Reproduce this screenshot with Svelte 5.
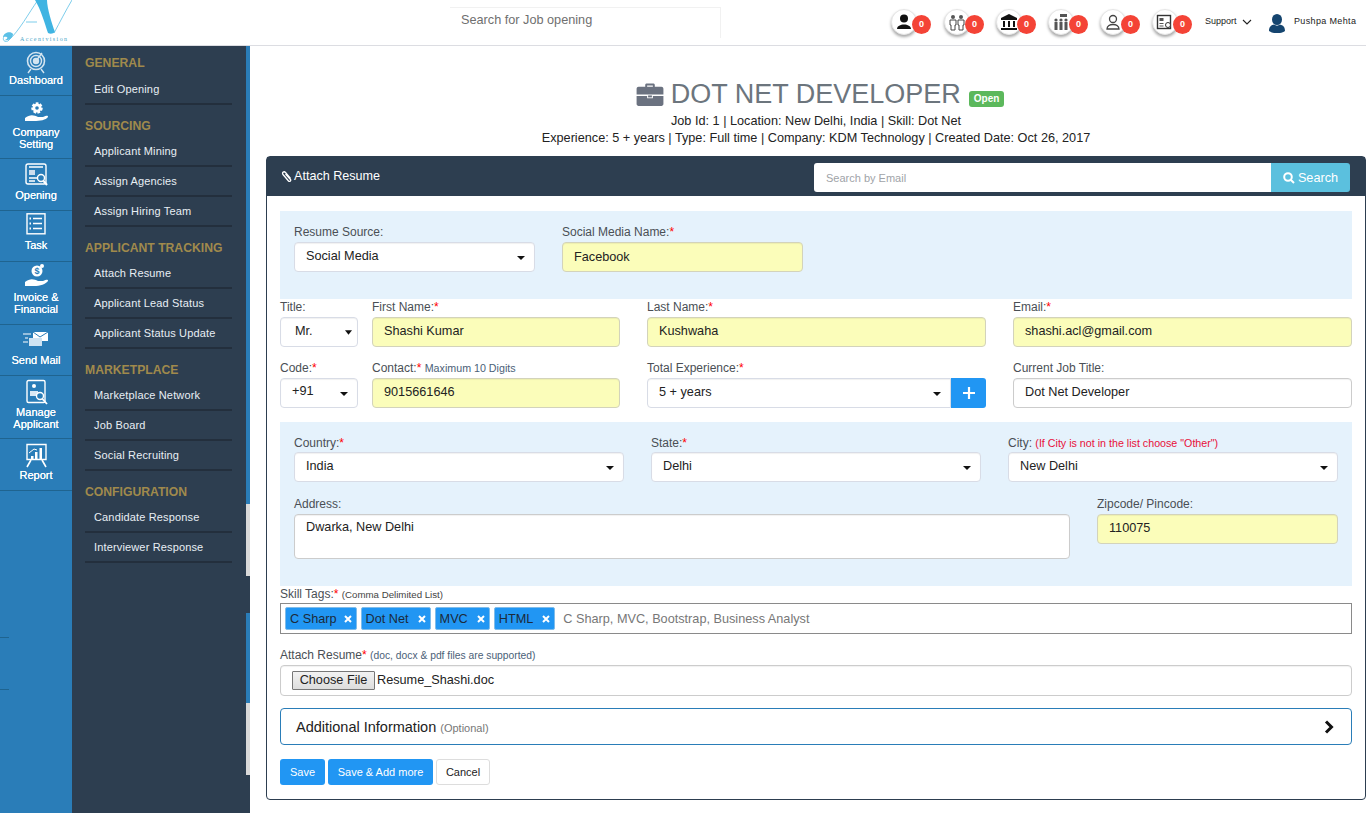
<script>
  const rail = [
    { id: 'target', label: ['Dashboard'], h: 50, pt: 5 },
    { id: 'gear', label: ['Company', 'Setting'], h: 63, pt: 3 },
    { id: 'opening', label: ['Opening'], h: 52, pt: 3 },
    { id: 'task', label: ['Task'], h: 51, pt: 3 },
    { id: 'money', label: ['Invoice &', 'Financial'], h: 63, pt: 2 },
    { id: 'mail', label: ['Send Mail'], h: 51, pt: 2 },
    { id: 'manage', label: ['Manage', 'Applicant'], h: 63, pt: 3 },
    { id: 'report', label: ['Report'], h: 52, pt: 3 }
  ];
  const menu = [
    { t: 'GENERAL', items: ['Edit Opening'] },
    { t: 'SOURCING', items: ['Applicant Mining', 'Assign Agencies', 'Assign Hiring Team'] },
    { t: 'APPLICANT TRACKING', items: ['Attach Resume', 'Applicant Lead Status', 'Applicant Status Update'] },
    { t: 'MARKETPLACE', items: ['Marketplace Network', 'Job Board', 'Social Recruiting'] },
    { t: 'CONFIGURATION', items: ['Candidate Response', 'Interviewer Response'] }
  ];
  const notes = ['user', 'team', 'bank', 'group', 'agent', 'news'];
  const tags = ['C Sharp', 'Dot Net', 'MVC', 'HTML'];
</script>

<div class="page">
  <header class="top">
    <div class="logo">
      <svg width="72" height="45" viewBox="0 0 72 45">
        <path d="M38 0 C28 14 20 30 8 41 C3 43 2 38 5 35" fill="none" stroke="#5cc0e6" stroke-width="0.8"/>
        <path d="M3 37 C4 32 11 31 13 34 C13 38 8 41 5 40 C8 39 9 36 3 37 Z" fill="#5cc0e6"/>
        <path d="M26 22 H37" stroke="#5cc0e6" stroke-width="0.8"/>
        <path d="M35 0 H47 C47 8 52 24 55 32 C53 34 50 34 48 33 C45 24 41 10 35 0 Z" fill="#3fb4e2"/>
        <path d="M72 0 C66 10 60 22 54 33" fill="none" stroke="#5cc0e6" stroke-width="0.8"/>
        <text x="20" y="41" class="logotext">Accentvision</text>
      </svg>
    </div>
    <div class="search-wrap"><div class="top-search">Search for Job opening</div></div>
    <div class="top-right">
      {#each notes as n}
        <div class="note">
          <span class="circle">
            <svg width="18" height="18" viewBox="0 0 18 18" fill={n === 'user' || n === 'bank' ? '#111' : '#555'}>
              {#if n === 'user'}
                <circle cx="9" cy="5.500" r="4"/><path d="M2 16 C2 10 16 10 16 16 Z"/>
              {:else if n === 'team'}
                <circle cx="5" cy="4" r="2"/><circle cx="13" cy="4" r="2"/><path d="M2 7h6v5H7v5H3v-5H2z" fill="none" stroke="#444"/><path d="M10 7h6v5h-1v5h-4v-5h-1z" fill="none" stroke="#444"/>
              {:else if n === 'bank'}
                <path d="M9 1 L17 5 V7 H1 V5 Z M3 8h2v6H3z M8 8h2v6H8z M13 8h2v6h-2z M1 15h16v2H1z"/>
              {:else if n === 'group'}
                <circle cx="4" cy="7" r="1.600"/><circle cx="9" cy="7" r="1.600"/><circle cx="14" cy="7" r="1.600"/><path d="M2.500 9h3v8h-3zM7.500 9h3v8h-3zM12.500 9h3v8h-3z"/><rect x="8" y="1" width="7" height="3"/>
              {:else if n === 'agent'}
                <circle cx="9" cy="6" r="3.500" fill="none" stroke="#444" stroke-width="1.300"/><path d="M3 16 C3 10 15 10 15 16 Z" fill="none" stroke="#444" stroke-width="1.300"/>
              {:else}
                <rect x="1.500" y="2.500" width="13" height="13" fill="none" stroke="#333" stroke-width="1.400"/><rect x="3.500" y="5" width="4" height="3"/><path d="M3.500 10h4v1h-4zM3.500 12.500h4v1h-4z"/><circle cx="12" cy="12" r="2.500" fill="#fff" stroke="#333"/>
              {/if}
            </svg>
          </span>
          <span class="badge">0</span>
        </div>
      {/each}
      <div class="support">Support
        <svg width="10" height="6" viewBox="0 0 10 6"><path d="M1 1 L5 5 L9 1" fill="none" stroke="#222" stroke-width="1.100"/></svg>
      </div>
      <svg class="me" width="18" height="20" viewBox="0 0 18 20" fill="#15456f"><ellipse cx="9" cy="6.500" rx="5" ry="5.500"/><path d="M1 18 C1 12 5 12 6 11.500 C8 13 10 13 12 11.500 C13 12 17 12 17 18 C13 21 5 21 1 18 Z"/></svg>
      <div class="name">Pushpa Mehta</div>
    </div>
  </header>

  <div class="body">
    <nav class="rail">
      {#each rail as r}
        <a class="rail-item" style="height:{r.h}px;padding-top:{r.pt}px">
          <svg width="28" height="26" viewBox="0 0 28 26" fill="none" stroke="#fff" stroke-width="1.400">
            {#if r.id === 'target'}
              <g opacity=".8"><circle cx="14" cy="10" r="8.500" stroke-width="1.600"/><circle cx="14" cy="10" r="5.500"/><circle cx="14" cy="10" r="2.500" fill="#fff"/><path d="M14 10 L20 2 M9 18 L6 22 M19 18 L22 22"/></g>
            {:else if r.id === 'gear'}
              <g transform="translate(0,2)"><circle cx="15" cy="7" r="4.500" fill="#fff" stroke-width="2.500" stroke-dasharray="2.500 1.400"/><circle cx="15" cy="7" r="1.800" fill="#2a7db8" stroke="none"/><path d="M3 17 C8 13 12 14 16 16 H21 C24 15 26 14 26 16 C24 19 18 20 12 20 H3 Z" fill="#fff" stroke="none"/></g>
            {:else if r.id === 'opening'}
              <rect x="4" y="2" width="20" height="20" rx="2"/><rect x="7" y="8" width="6" height="5" fill="#cde" stroke="none"/><path d="M7 5h14M7 16h8M7 19h6" /><circle cx="19" cy="16" r="3.500" fill="#2a7db8"/><path d="M21.500 19 L25 23" stroke-width="2"/>
            {:else if r.id === 'task'}
              <rect x="5" y="0.800" width="18" height="20"/><path d="M11 5.500h9M11 10.500h9M11 15.500h9" stroke-width="1.600"/><path d="M7.500 5.500h1.500M7.500 10.500h1.500M7.500 15.500h1.500" stroke-width="2"/>
            {:else if r.id === 'money'}
              <circle cx="15" cy="7" r="5.500" fill="#fff" stroke="none"/><text x="12.500" y="10" class="dollar">$</text><circle cx="20" cy="2" r="2" fill="#fff" stroke="none"/><path d="M3 18 C8 14 12 15 16 17 H21 C24 16 26 15 26 17 C24 20 18 22 12 22 H3 Z" fill="#fff" stroke="none"/>
            {:else if r.id === 'mail'}
              <g transform="translate(0,3)"><rect x="11" y="2" width="15" height="9" fill="#fff" stroke="none"/><rect x="7" y="8" width="13" height="8" fill="#cfe3f2" stroke="none"/><path d="M11 2 L18 7 L26 2" stroke="#2a7db8" stroke-width="1"/><path d="M1 4h8M3 8h3M1 12h5" stroke-width="1.200"/></g>
            {:else if r.id === 'manage'}
              <rect x="5" y="1.500" width="18" height="22" rx="1.500"/><circle cx="12" cy="7" r="2" fill="#fff" stroke="none"/><path d="M8 12h8v5H8z" fill="#dbe9f4" stroke="none"/><circle cx="18" cy="17" r="3.500" fill="#2a7db8"/><path d="M20.500 20 L25 25" stroke-width="1.800"/>
            {:else}
              <path d="M5 2.500h19v15H5z"/><path d="M9 14h2.500v3H9zM13 10h2.500v7H13zM17.500 6h2.500v11h-2.500z" fill="#fff" stroke="none"/><path d="M7 11 L12 7 L15 8" stroke-width="1"/><path d="M9 18 L5 25 M20 18 L24 25" stroke-width="1.600"/>
            {/if}
          </svg>
          {#each r.label as l}<span class="rail-text">{l}</span>{/each}
        </a>
      {/each}
      <i class="tick t1"></i><i class="tick t2"></i>
    </nav>

    <aside class="menu">
      {#each menu as m, i}
        <section class="group" class:first={i === 0}>
          <h4>{m.t}</h4>
          {#each m.items as it}<a class="mi">{it}</a>{/each}
        </section>
      {/each}
      <div class="sb">
        <i class="b" style="height:458px"></i><i class="g" style="height:72px"></i><i class="d" style="height:37px"></i><i class="b" style="height:90px"></i><i class="g" style="height:72px"></i>
      </div>
    </aside>

    <main class="main">
      <div class="title">
        <h1>
          <svg width="28" height="23" viewBox="0 0 28 24" fill="#6b7280"><path d="M9 4 V2 C9 1 10 .5 11 .5 H17 C18 .5 19 1 19 2 V4 H26 C27 4 28 5 28 6 V12 H0 V6 C0 5 1 4 2 4 Z M11 2.500 V4 H17 V2.500 Z"/><path d="M0 13.500 H11 V16 H17 V13.500 H28 V22 C28 23 27 24 26 24 H2 C1 24 0 23 0 22 Z"/><rect x="12" y="13" width="4" height="2"/></svg>
          <span>DOT NET DEVELOPER</span><em>Open</em>
        </h1>
        <p>Job Id: 1 | Location: New Delhi, India | Skill: Dot Net</p>
        <p>Experience: 5 + years | Type: Full time | Company: KDM Technology | Created Date: Oct 26, 2017</p>
      </div>

      <div class="card">
        <div class="card-head">
          <div class="ch-title">
            <svg width="13" height="14" viewBox="0 0 13 14" fill="none" stroke="#fff" stroke-width="1.300"><path d="M10.500 8.500 L5.500 2.500 C4 .8 1.500 2.500 3 4.500 L8.500 11 C9.500 12 11.500 10.800 10.500 9.500 L5.500 4"/></svg>
            Attach Resume
          </div>
          <div class="ch-search"><div class="ch-input">Search by Email</div><div class="ch-btn">
            <svg width="12" height="12" viewBox="0 0 12 12" fill="none" stroke="#fff" stroke-width="2"><circle cx="5" cy="5" r="3.800"/><path d="M8 8 L11 11"/></svg>
            Search</div></div>
        </div>
        <div class="card-body">
          <div class="band b1">
            <div class="f"><label>Resume Source:</label><div class="ctl sel">Social Media<i class="caret"></i></div></div>
            <div class="f"><label>Social Media Name:<b>*</b></label><div class="ctl yel fb">Facebook</div></div>
          </div>

          <div class="row r1">
            <div class="sub">
              <div class="f"><label>Title:</label><div class="ctl sel t">Mr.<svg class="native" width="7" height="5" viewBox="0 0 8 5"><path d="M0 0 L8 0 L4 5 Z" fill="#111"/></svg></div></div>
              <div class="f"><label>First Name:<b>*</b></label><div class="ctl yel">Shashi Kumar</div></div>
            </div>
            <div class="f"><label>Last Name:<b>*</b></label><div class="ctl yel">Kushwaha</div></div>
            <div class="f"><label>Email:<b>*</b></label><div class="ctl yel">shashi.acl@gmail.com</div></div>
          </div>

          <div class="row r2">
            <div class="sub">
              <div class="f"><label>Code:<b>*</b></label><div class="ctl sel c">+91<i class="caret"></i></div></div>
              <div class="f"><label>Contact:<b>*</b> <small>Maximum 10 Digits</small></label><div class="ctl yel">9015661646</div></div>
            </div>
            <div class="f"><label>Total Experience:<b>*</b></label>
              <div class="grp"><div class="ctl sel g1">5 + years<i class="caret"></i></div><div class="plus"><svg width="12" height="12" viewBox="0 0 12 12"><path d="M6 0 V12 M0 6 H12" stroke="#fff" stroke-width="2.200"/></svg></div></div>
            </div>
            <div class="f"><label>Current Job Title:</label><div class="ctl">Dot Net Developer</div></div>
          </div>

          <div class="band b2">
            <div class="three">
              <div class="f"><label>Country:<b>*</b></label><div class="ctl sel">India<i class="caret"></i></div></div>
              <div class="f"><label>State:<b>*</b></label><div class="ctl sel">Delhi<i class="caret"></i></div></div>
              <div class="f"><label>City: <small class="red">(If City is not in the list choose "Other")</small></label><div class="ctl sel">New Delhi<i class="caret"></i></div></div>
            </div>
            <div class="addr">
              <div class="f"><label>Address:</label><div class="ctl ta">Dwarka, New Delhi</div></div>
              <div class="f"><label>Zipcode/ Pincode:</label><div class="ctl yel">110075</div></div>
            </div>
          </div>

          <div class="f sk"><label>Skill Tags:<b>*</b> <small class="xs">(Comma Delimited List)</small></label>
            <div class="tags">
              {#each tags as t}<span class="tag">{t}<svg width="8" height="8" viewBox="0 0 8 8"><path d="M1 1 L7 7 M7 1 L1 7" stroke="#fff" stroke-width="2"/></svg></span>{/each}
              <span class="ph">C Sharp, MVC, Bootstrap, Business Analyst</span>
            </div>
          </div>

          <div class="f at"><label>Attach Resume<b>*</b> <small class="xs2">(doc, docx &amp; pdf files are supported)</small></label>
            <div class="ctl file"><span class="choose">Choose File</span><span>Resume_Shashi.doc</span></div>
          </div>

          <div class="acc"><span>Additional Information <small>(Optional)</small></span>
            <svg width="10" height="14" viewBox="0 0 10 14"><path d="M2 1.500 L7.500 7 L2 12.500" fill="none" stroke="#111" stroke-width="3"/></svg>
          </div>

          <div class="btns"><span class="btn p">Save</span><span class="btn p">Save &amp; Add more</span><span class="btn w">Cancel</span></div>
        </div>
      </div>
    </main>
  </div>
</div>

<style>
  :global(body) { margin: 0; background: #fff; font-family: "Liberation Sans", Arial, sans-serif; color: #333; overflow: hidden; }
  .page { width: 1366px; height: 813px; overflow: hidden; }
  .top { height: 45px; border-bottom: 1px solid #dcdde2; display: flex; align-items: flex-start; background: #fff; position: relative; }
  .logo { width: 72px; height: 45px; }
  .logotext { font-size: 6px; fill: #4aa6c8; letter-spacing: 1.400px; font-family: "Liberation Serif", serif; }
  .search-wrap { margin-left: 378px; width: 270px; height: 30px; margin-top: 7px; border-top: 1px solid #f1f1f1; border-right: 1px solid #f1f1f1; }
  .top-search { padding: 5px 0 0 11px; font-size: 12.700px; line-height: 15px; color: #6f6f6f; }
  .top-right { position: absolute; left: 891px; top: 0; right: 0; height: 45px; }
  .note { position: absolute; top: 9px; width: 42px; height: 26px; }
  .note:nth-child(1) { left: 0; } .note:nth-child(2) { left: 53px; } .note:nth-child(3) { left: 105px; }
  .note:nth-child(4) { left: 157px; } .note:nth-child(5) { left: 209px; } .note:nth-child(6) { left: 261px; }
  .circle { position: absolute; left: 0; top: 0; width: 26px; height: 26px; border-radius: 50%; background: #fff; border: 1px solid #e6e6e6; box-shadow: 0 2px 3px rgba(0,0,0,.35); display: flex; align-items: center; justify-content: center; box-sizing: border-box; }
  .badge { position: absolute; left: 21px; top: 6px; width: 19px; height: 19px; border-radius: 50%; background: #f44336; color: #fff; font-size: 9px; font-weight: bold; text-align: center; line-height: 19px; }
  .support { position: absolute; left: 314px; top: 15px; font-size: 9px; color: #222; display: flex; align-items: center; gap: 5px; line-height: 13px; }
  .me { position: absolute; left: 377px; top: 13px; }
  .name { position: absolute; left: 403px; top: 15px; font-size: 9px; letter-spacing: .35px; line-height: 13px; color: #222; }

  .body { display: flex; height: 767px; }
  .rail { width: 72px; background: #2a7db8; flex: none; position: relative; }
  .rail-item { display: flex; flex-direction: column; align-items: center; box-sizing: border-box; border-bottom: 1px solid #1f6490; color: #fff; font-size: 11px; }
  .rail-text { line-height: 12px; text-shadow: 0 0 .5px #fff; white-space: nowrap; }
  .dollar { font-size: 9px; font-weight: bold; fill: #2a7db8; stroke: none; }
  .rail-item svg { margin-bottom: 1px; }
  .rail-item:nth-child(1) svg { margin-bottom: -3px; }
  .rail-item:nth-child(4) svg { margin-bottom: 0; margin-top: -1px; }
  .tick { position: absolute; left: 0; width: 9px; height: 1px; background: #1f6490; }
  .t1 { top: 591px; } .t2 { top: 643px; }

  .menu { width: 178px; background: #2d3e50; flex: none; position: relative; box-sizing: border-box; padding-left: 13px; }
  .group { width: 147px; }
  .group h4 { margin: 0; padding: 13px 0 3px; font-size: 12.200px; line-height: 16px; font-weight: bold; color: #a08a4c; }
  .group.first h4 { padding: 9px 0 4px; }
  .mi { display: block; box-sizing: border-box; height: 30px; padding: 7px 0 0 9px; line-height: 14px; font-size: 11px; color: #e8eef4; border-bottom: 2px solid #232f3d; letter-spacing: .15px; }
  .sb { position: absolute; right: 0; top: 0; width: 4px; display: flex; flex-direction: column; }
  .sb i { display: block; }
  .sb .b { background: #2a7db8; } .sb .g { background: #d9d9d9; } .sb .d { background: #2d3e50; }

  .main { flex: 1; min-width: 0; padding: 0 0 0 16px; box-sizing: border-box; }
  .title { text-align: center; color: #222; font-size: 12.700px; height: 110px; }
  .title h1 { margin: 0 0 0 8px; padding-top: 31px; height: 35px; font-weight: normal; font-size: 27px; line-height: 35px; color: #6c757d; display: flex; justify-content: center; align-items: center; }
  .title h1 svg { margin-right: 7px; }
  .title h1 em { font-style: normal; font-weight: bold; font-size: 10px; color: #fff; background: #5cb85c; border-radius: 3px; padding: 1px 5px; line-height: 14px; margin: 9px 0 0 8px; }
  .title p { margin: 0; line-height: 17px; }
  .title p:first-of-type { margin-top: 1px; }

  .card { border: 1px solid #2d3e50; border-radius: 4px; height: 644px; box-sizing: border-box; }
  .card-head { height: 39px; background: #2d3e50; display: flex; justify-content: space-between; align-items: flex-start; color: #fff; }
  .ch-title { font-size: 12.600px; padding: 12px 0 0 13px; display: flex; align-items: center; gap: 1px; line-height: 15px; }
  .ch-search { display: flex; margin: 6px 15px 0 0; }
  .ch-input { width: 457px; height: 29px; background: #fff; border-radius: 3px 0 0 3px; font-size: 11px; color: #a0a3a8; line-height: 30px; padding-left: 12px; box-sizing: border-box; }
  .ch-btn { width: 79px; height: 29px; background: #5bc0de; border-radius: 0 3px 3px 0; font-size: 12.700px; display: flex; align-items: center; justify-content: center; gap: 3px; }

  .card-body { padding: 15px 13px 0 13px; }
  .band { background: #e5f2fc; padding: 0 14px; box-sizing: border-box; }
  .b1 { height: 88px; display: flex; gap: 27px; padding-top: 14px; }
  .b1 .f { width: 241px; }
  .f label { display: block; font-size: 12px; line-height: 14px; color: #4a4f55; white-space: nowrap; }
  .f b { color: #f00; font-weight: normal; }
  .f small { font-size: 10.700px; color: #4a6178; }
  .f small.red { color: #e8103a; }
  .f small.xs { font-size: 9.700px; color: #444; }
  .f small.xs2 { font-size: 10.300px; color: #4a6178; }
  .ctl { height: 30px; box-sizing: border-box; border: 1px solid #ccc; border-radius: 4px; background: #fff; font-size: 12.700px; line-height: 27px; padding-left: 11px; position: relative; color: #222; white-space: nowrap; margin-top: 3px; box-shadow: inset 0 1px 1px rgba(0,0,0,.06); }
  .sel { border-color: #d8dce6; }
  .c { line-height: 25px; }
  .yel { background: #fbfdba; border-color: #d3d3bb; }
  .fb { line-height: 29px; }
  .caret { position: absolute; right: 9px; top: 13px; width: 0; height: 0; border-left: 4px solid transparent; border-right: 4px solid transparent; border-top: 4px solid #111; }
  .row { display: grid; grid-template-columns: 340px 339px 339px; column-gap: 27px; }
  .sub { display: grid; grid-template-columns: 78px 248px; column-gap: 14px; }
  .r1 { margin-top: 1px; }
  .r2 { margin-top: 14px; }
  .t { padding-left: 14px; }
  .native { position: absolute; right: 5px; top: 12px; }
  .grp { display: flex; }
  .grp .ctl { flex: 1; border-radius: 4px 0 0 4px; }
  .plus { width: 35px; height: 30px; margin-top: 3px; background: #2196f3; border-radius: 0 3px 3px 0; display: flex; align-items: center; justify-content: center; }
  .b2 { margin-top: 14px; height: 164px; padding-top: 14px; }
  .b2 .three .ctl { margin-top: 2px; }
  .three { display: grid; grid-template-columns: 330px 330px 330px; column-gap: 27px; }
  .addr { display: grid; grid-template-columns: 776px 241px; column-gap: 27px; margin-top: 15px; }
  .addr .ctl { margin-top: 3px; }
  .ta { height: 45px; line-height: 24px; }
  .sk { margin-top: 1px; }
  .sk .tags { margin-top: 1px; height: 31px; box-sizing: border-box; border: 1px solid #8a8a8a; display: flex; align-items: center; padding-left: 4px; gap: 4px; background: #fff; }
  .tag { height: 23px; box-sizing: border-box; background: #2196f3; border: 1px solid #7fbcea; border-radius: 2px; padding: 0 4px; font-size: 12.700px; color: #1c2a3a; display: flex; align-items: center; gap: 9px; }
  .tag:first-child { gap: 7px; }
  .ph { font-size: 12.700px; color: #777; margin-left: 4px; }
  .at { margin-top: 14px; }
  .at .file { margin-top: 2px; height: 31px; display: flex; align-items: center; padding-left: 11px; color: #222; }
  .choose { height: 19px; box-sizing: border-box; width: 83px; border: 1px solid #777; background: linear-gradient(#f2f2f2,#ddd); line-height: 17px; text-align: center; margin-right: 2px; border-radius: 1px; }
  .acc { margin-top: 12px; height: 37px; box-sizing: border-box; border: 1px solid #2a7db8; border-radius: 4px; display: flex; align-items: center; justify-content: space-between; padding: 0 17px 0 15px; font-size: 14.500px; color: #222; }
  .acc small { font-size: 11px; color: #777; }
  .btns { display: flex; margin-top: 14px; gap: 3px; }
  .btn { height: 26px; box-sizing: border-box; border-radius: 3px; font-size: 11px; line-height: 26px; text-align: center; }
  .btn.p { background: #2196f3; color: #fff; }
  .btn.p:nth-child(1) { width: 45px; } .btn.p:nth-child(2) { width: 105px; }
  .btn.w { width: 54px; background: #fff; border: 1px solid #ddd; line-height: 24px; color: #222; }
</style>
